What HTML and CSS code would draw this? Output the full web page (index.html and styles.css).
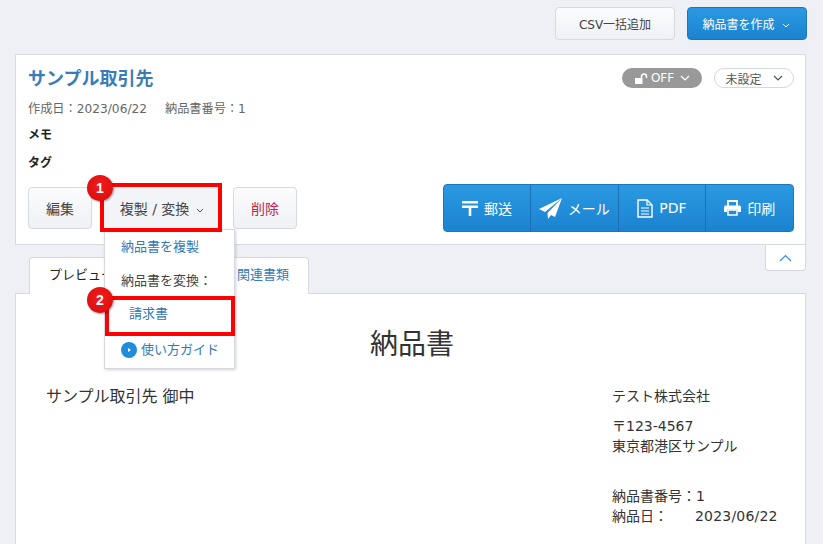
FILE: index.html
```html
<!DOCTYPE html>
<html lang="ja">
<head>
<meta charset="utf-8">
<title>納品書</title>
<link rel="stylesheet" href="styles.css">
</head>
<body>
<div class="page">
  <div class="topbar">
    <button class="btn csv">CSV一括追加</button>
    <button class="btn primary create">納品書を作成<svg class="chev" width="8" height="5" viewBox="0 0 8 5"><path d="M1 1l3 3 3-3" fill="none" stroke="#fff" stroke-width="1"/></svg></button>
  </div>
  <section class="card">
    <div class="head">
      <h1 class="title">サンプル取引先</h1>
      <div class="badges">
        <span class="pill-off"><svg width="14" height="11" viewBox="0 0 14 11"><path d="M1 5h7.500v6H1z" fill="#fff"/><path d="M7.500 5V3.500a2.500 2.500 0 0 1 5 0V5" fill="none" stroke="#fff" stroke-width="1.500"/></svg>OFF<svg width="10" height="6" viewBox="0 0 10 6"><path d="M1 1l4 4 4-4" fill="none" stroke="#fff" stroke-width="1.200"/></svg></span>
        <span class="pill-set">未設定<svg width="10" height="6" viewBox="0 0 10 6"><path d="M1 1l4 4 4-4" fill="none" stroke="#555" stroke-width="1.200"/></svg></span>
      </div>
    </div>
    <p class="meta"><span>作成日：2023/06/22</span><span>納品書番号：1</span></p>
    <p class="label memo">メモ</p>
    <p class="label tag">タグ</p>
    <div class="actions">
      <div class="left">
        <button class="btn edit">編集</button>
        <button class="btn convert">複製 / 変換<svg class="chev" width="8" height="5" viewBox="0 0 8 5"><path d="M1 1l3 3 3-3" fill="none" stroke="#555" stroke-width="1"/></svg></button>
        <button class="btn del">削除</button>
      </div>
      <div class="sendgroup">
        <button class="send post"><svg width="16" height="15" viewBox="0 0 16 15"><path d="M0 0h16v2.500H0zM0 4.500h16V7H9.300v8H6.700V7H0z" fill="#fff"/></svg>郵送</button>
        <button class="send mail"><svg width="23" height="21" viewBox="0 0 23 21"><path d="M23 0L0 11l6 3zM23 0L8.500 15l.5 6 3-4 4 2z" fill="#fff"/></svg>メール</button>
        <button class="send pdf"><svg width="16" height="19" viewBox="0 0 16 19"><path d="M1 1h9l5 5v12H1z" fill="none" stroke="#fff" stroke-width="1.400"/><path d="M10 1v5h5M4 9h8M4 12h8M4 15h8" fill="none" stroke="#fff" stroke-width="1.200"/></svg>PDF</button>
        <button class="send print"><svg width="17" height="16" viewBox="0 0 17 16"><path d="M4 6V1h9v5" fill="none" stroke="#fff" stroke-width="1.800"/><path d="M0 7a1.500 1.500 0 0 1 1.500-1.500h14A1.500 1.500 0 0 1 17 7v5h-3V9.500H3V12H0z" fill="#fff"/><path d="M4 10h9v5H4z" fill="none" stroke="#fff" stroke-width="1.500"/></svg>印刷</button>
      </div>
    </div>
  </section>
  <div class="tabrow">
    <div class="tabs">
      <div class="tab active">プレビュー</div>
      <div class="tab rel">関連書類</div>
    </div>
    <div class="collapse"><svg width="13" height="8" viewBox="0 0 13 8"><path d="M1 7l5.500-5.500L12 7" fill="none" stroke="#3b8fd6" stroke-width="1.200"/></svg></div>
  </div>
  <section class="doc">
    <h2 class="doc-title">納品書</h2>
    <div class="doc-body">
      <div class="to">サンプル取引先 御中</div>
      <div class="from">
        <p class="company">テスト株式会社</p>
        <p class="addr">〒123-4567<br>東京都港区サンプル</p>
        <p class="nums">納品書番号：1<br>納品日：<span class="date">2023/06/22</span></p>
      </div>
    </div>
  </section>

  <div class="menu">
    <a class="m-item link">納品書を複製</a>
    <div class="m-item head-item">納品書を変換：</div>
    <a class="m-item link sub">請求書</a>
    <div class="m-item guide"><svg width="16" height="16" viewBox="0 0 16 16"><circle cx="8" cy="8" r="8" fill="#1f8ddb"/><path d="M7 6l3 2-3 2z" fill="#fff"/></svg>使い方ガイド</div>
  </div>
  <div class="mark box1"></div>
  <div class="mark box2"></div>
  <div class="num n1">1</div>
  <div class="num n2">2</div>
</div>
</body>
</html>
```
FILE: styles.css
```css
* { box-sizing: border-box; }
html, body { margin: 0; padding: 0; }
body {
  background: #eff0f5;
  font-family: "DejaVu Sans", "Noto Sans CJK JP", sans-serif;
  color: #333;
  font-size: 13px;
}
.page { position: relative; width: 823px; height: 544px; overflow: hidden; padding: 7px 17px 0 15px; }
p, h1, h2 { margin: 0; font-weight: normal; }
button { font: inherit; cursor: pointer; }

.topbar { display: flex; justify-content: flex-end; gap: 12px; height: 33px; margin: 0 -1px 14px 0; }
.btn {
  height: 33px; border: 1px solid #d5d9e0; border-radius: 4px; padding: 0;
  background: linear-gradient(#fcfcfd, #eff1f5); color: #444; font-size: 12px;
}
.chev { margin-left: 7px; vertical-align: 1px; }
.csv { width: 120px; }
.primary { background: linear-gradient(#2b99e2, #1b83d0); border-color: #1b76bd; color: #fff; }
.create { width: 120px; padding-right: 2px; }

.card { height: 191px; background: #fff; border: 1px solid #d7d9e0; padding: 12px 11px 0 12px; }
.head { display: flex; justify-content: space-between; align-items: center; height: 24px; }
.title { font-size: 18px; font-weight: 700; color: #3a7cb8; line-height: 24px; }
.badges { display: flex; gap: 12px; align-items: center; margin-top: -2px; }
.pill-off {
  display: flex; align-items: center; gap: 3px; justify-content: center;
  width: 80px; height: 20px; border-radius: 10px; background: #999; color: #fff; font-size: 12px;
}
.pill-off svg:last-child { margin-left: 3px; }
.pill-set {
  display: flex; align-items: center; justify-content: center; gap: 11px;
  width: 80px; height: 20px; border-radius: 10px; border: 1px solid #d5d8de; color: #555; font-size: 12px;
}
.meta { margin-top: 9px; font-size: 12.2px; color: #666; line-height: 18px; display: flex; gap: 18px; }
.label { font-size: 12px; font-weight: 700; color: #222; line-height: 18px; }
.memo { margin-top: 8px; }
.tag { margin-top: 10px; }
.actions { display: flex; justify-content: space-between; align-items: center; margin-top: 12px; }
.left { display: flex; align-items: center; }
.edit { width: 64px; height: 42px; font-size: 14px; }
.convert { width: 116px; height: 42px; font-size: 14px; border: none; background: #f3f4f7; margin: 0 13px 0 12px; white-space: nowrap; }
.del { width: 64px; height: 42px; font-size: 14px; color: #c7254e; }
.sendgroup {
  display: flex; height: 48px; width: 351px; border: 1px solid #1b76bd; border-radius: 4px; overflow: hidden;
  background: linear-gradient(#2b99e2, #1b83d0);
}
.send {
  flex: 1 1 0; background: none; border: none; border-left: 1px solid #1a70b4; color: #fff; font-size: 14px;
  display: flex; align-items: center; justify-content: center; gap: 6px; padding: 0; white-space: nowrap;
}
.send.post { flex: 0 0 86px; border-left: none; }

.tabrow { display: flex; justify-content: space-between; align-items: flex-start; height: 48px; padding-left: 14px; }
.tabs { display: flex; margin-top: 12px; }
.tab {
  height: 37px; border: 1px solid #d7d9e0; border-bottom: none; border-radius: 4px 4px 0 0;
  background: #fff; font-size: 13px; line-height: 33px; margin-bottom: -1px;
}
.active { width: 120px; color: #222; padding-left: 19px; }
.rel { width: 89px; color: #337ab7; margin-left: 71px; padding-left: 16px; }
.collapse {
  width: 41px; height: 26px; background: #fff; border: 1px solid #d7d9e0; border-top: none;
  border-radius: 0 0 4px 4px; display: flex; align-items: center; justify-content: center;
}

.doc { height: 260px; background: #fff; border: 1px solid #d7d9e0; padding: 31px 27px 0 30px; }
.doc-title { font-size: 28px; text-align: center; line-height: 40px; color: #333; }
.doc-body { display: flex; justify-content: space-between; margin-top: 19px; }
.to { font-size: 16px; line-height: 26px; }
.from { width: 166px; font-size: 14px; line-height: 20px; color: #333; }
.company { line-height: 26px; margin-top: -1px; }
.addr { margin-top: 7px; }
.nums { margin-top: 30px; }
.date { margin-left: 27px; letter-spacing: .2px; }

.menu {
  position: absolute; left: 104px; top: 229px; width: 131px; height: 140px;
  background: #fff; border: 1px solid #d7d9e0; box-shadow: 1px 1px 3px rgba(0,0,0,.18);
  font-size: 13px; padding-top: 7px;
}
.m-item { display: block; line-height: 20px; padding-left: 16px; white-space: nowrap; }
.link { color: #337ab7; }
.head-item { margin-top: 8px; padding-top: 6px; color: #444; }
.sub { margin-top: 13px; padding-left: 24px; }
.guide { margin-top: 16px; color: #337ab7; display: flex; align-items: center; gap: 4px; }

.mark { position: absolute; border: 4px solid #f00; }
.box1 { left: 100px; top: 183px; width: 122px; height: 49px; }
.box2 { left: 105px; top: 296px; width: 130px; height: 40px; }
.num {
  position: absolute; width: 26px; height: 26px; border-radius: 50%;
  background: radial-gradient(circle at 50% 40%, #f41a1a, #d40d0d);
  box-shadow: 1px 1px 2px rgba(0,0,0,.35);
  color: #fff; font-family: "Liberation Sans", sans-serif; font-size: 14px; font-weight: 700; line-height: 26px; text-align: center;
}
.n1 { left: 87px; top: 175px; }
.n2 { left: 87px; top: 287px; }
```
